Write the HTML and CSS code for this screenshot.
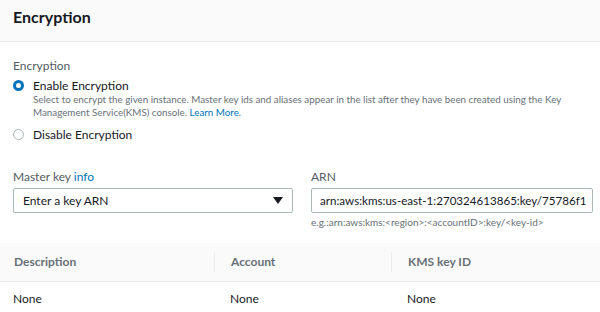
FILE: index.html
```html
<!DOCTYPE html>
<html lang="en">

<head>
    <meta charset="UTF-8">
    <title>Encryption</title>
    <link rel="stylesheet" href="styles.css">
</head>

<body>
    <div class="panel">
        <div class="panel-head">
            <h2>Encryption</h2>
        </div>
        <div class="panel-body">
            <div class="label">Encryption</div>
            <div class="radio-row">
                <span class="radio on"></span>
                <div>
                    <div class="radio-title">Enable Encryption</div>
                    <div class="radio-desc">Select to encrypt the given instance. Master key ids and aliases appear in the list after they have been created using the Key<br>Management Service(KMS) console. <a href="#">Learn More</a>.</div>
                </div>
            </div>
            <div class="radio-row">
                <span class="radio"></span>
                <div class="radio-title">Disable Encryption</div>
            </div>

            <div class="fields">
                <div>
                    <div class="label">Master key <a href="#">info</a></div>
                    <div class="select">
                        <span>Enter a key ARN</span>
                        <span class="caret"></span>
                    </div>
                </div>
                <div>
                    <div class="label">ARN</div>
                    <div class="input">arn:aws:kms:us-east-1:270324613865:key/75786f1</div>
                    <div class="hint">e.g.:arn:aws:kms:&lt;region&gt;:&lt;accountID&gt;:key/&lt;key-id&gt;</div>
                </div>
            </div>
        </div>

        <div class="table">
            <div class="th">Description</div>
            <div class="th sep">Account</div>
            <div class="th sep">KMS key ID</div>
            <div class="td">None</div>
            <div class="td">None</div>
            <div class="td">None</div>
        </div>
    </div>
</body>

</html>
```

FILE: styles.css
```css
* {
    box-sizing: border-box;
}

body {
    margin: 0;
    font-family: Lato, "Noto Sans", sans-serif;
    font-size: 12px;
    color: #16191f;
    background: #fff;
}

a {
    color: #0073bb;
    text-decoration: none;
}

.panel-head {
    height: 42px;
    background: #fafafa;
    border-bottom: 1px solid #eaeded;
    padding: 7px 13px;
}

.panel-head h2 {
    margin: 0;
    font-size: 16px;
    font-weight: 700;
    line-height: 20px;
}

.panel-body {
    padding: 16px 7px 10px 13px;
}

.label {
    color: #545b64;
    line-height: 16px;
    margin-bottom: 3px;
}

.radio-row {
    display: flex;
    align-items: flex-start;
    gap: 9px;
    margin-bottom: 7px;
}

.radio {
    flex: none;
    width: 11px;
    height: 11px;
    margin-top: 3px;
    border-radius: 50%;
    border: 1px solid #aab7b8;
    background: #fff;
}

.radio.on {
    border: 3px solid #0073bb;
}

.radio-title {
    line-height: 17px;
}

.radio-desc {
    font-size: 9.8px;
    line-height: 13px;
    color: #687078;
    margin-top: -1px;
}

.fields {
    display: grid;
    grid-template-columns: 280px 282px;
    gap: 18px;
    margin-top: 26px;
}

.select,
.input {
    height: 25px;
    border: 1px solid #aab7b8;
    border-radius: 2px;
    display: flex;
    align-items: center;
    padding: 0 9px;
}

.select {
    justify-content: space-between;
}

.input {
    padding: 0 8px;
    font-size: 11.6px;
    white-space: nowrap;
    overflow: hidden;
}

.caret {
    width: 0;
    height: 0;
    border-left: 5px solid transparent;
    border-right: 5px solid transparent;
    border-top: 7px solid #16191f;
}

.hint {
    font-size: 10px;
    color: #687078;
    margin-top: 3px;
}

.table {
    display: grid;
    grid-template-columns: 217px 177px 1fr;
    margin-top: 5px;
}

.th {
    background: #fafafa;
    border-bottom: 1px solid #eaeded;
    height: 39px;
    display: flex;
    align-items: center;
    padding: 0 0 2px 14px;
    color: #687078;
    font-weight: 700;
    position: relative;
}

.th.sep::before {
    content: "";
    position: absolute;
    left: -3px;
    top: 9px;
    bottom: 9px;
    border-left: 1px solid #eaeded;
}

.td {
    padding: 9px 13px;
    color: #16191f;
    line-height: 16px;
}
```
